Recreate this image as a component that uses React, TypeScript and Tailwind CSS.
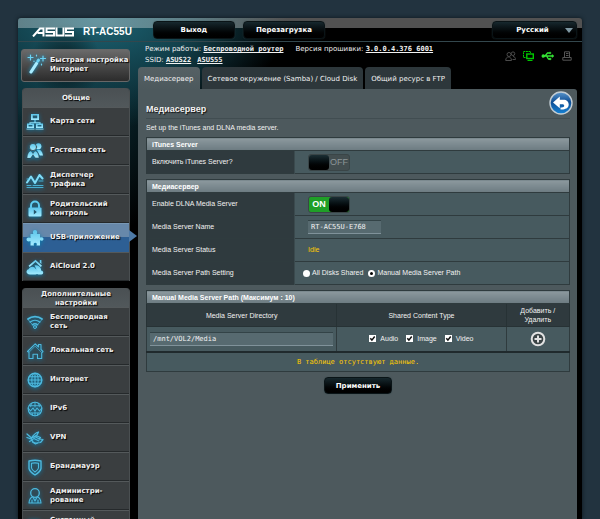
import { useState } from "react"
import type { ReactNode } from "react"
import clsx from "clsx"

const SANS = "font-['DejaVu_Sans',Verdana,sans-serif]"
const ARIAL = "font-['Liberation_Sans',Arial,sans-serif]"
const MONO = "font-['DejaVu_Sans_Mono',monospace]"

const DARK_BUTTON =
  "rounded-[4px] border border-[#0a1417] bg-linear-to-b from-[#17282e] via-[#060c0e] to-black font-bold text-white shadow-[0_0_1px_#33474d]"

function Glyph({ children, filled }: { children: ReactNode; filled?: boolean }) {
  return (
    <svg
      viewBox="0 0 18 18"
      className="size-[18px] shrink-0 overflow-visible drop-shadow-[0_1px_2px_#0a7fb0]"
      fill={filled ? "url(#cyan)" : "none"}
      stroke={filled ? "none" : "#4db9de"}
      strokeWidth="1.1"
      strokeLinejoin="round"
      strokeLinecap="round"
      aria-hidden
    >
      {children}
    </svg>
  )
}

const icons = {
  map: (
    <Glyph filled>
      <path fillRule="evenodd" d="M5 1h8v6H5zM6.8 2.6v2.6h4.4V2.6z" />
      <path d="M8.4 7h1.2v2.2h5V11h-1.2v-.8H4.600V11H3.400V9.200h5z" />
      <path fillRule="evenodd" d="M1 10.500h7v4.500H1zM2.600 12v1.500h3.800V12z" />
      <path fillRule="evenodd" d="M10 10.500h7v4.500h-7zM11.600 12v1.500h3.800V12z" />
      <path d="M.500 15.500h8v1h-8zM9.500 15.500h8v1h-8z" />
    </Glyph>
  ),
  guest: (
    <Glyph filled>
      <circle cx="12.500" cy="4.200" r="2.900" />
      <path d="M10.800 7.800c3-.8 5.400.8 6.200 5.700h-3.200z" />
      <circle cx="7" cy="5" r="3.600" stroke="#353a3c" strokeWidth=".7" />
      <path
        d="M1 16c.2-4.300 1.800-6.600 4-7.300L7 11.500 9 8.700c2.300.7 3.900 3 4.100 7.300H9.300L7 12.800 4.700 16z"
        stroke="#353a3c"
        strokeWidth=".5"
      />
    </Glyph>
  ),
  traffic: (
    <Glyph>
      <path d="M1 11.500 5 5.500l4 6.500 4.500-8 3 3.500" strokeWidth="2" stroke="#7fdcf8" />
      <path d="M1 14.500h4M7 14.500h10M1 8h1.500M13 10h4M1 16.500h16" strokeWidth=".9" />
    </Glyph>
  ),
  lock: (
    <Glyph filled>
      <path
        d="M5 8V5.500a4 4 0 0 1 8 0V8"
        fill="none"
        stroke="#5fcdf2"
        strokeWidth="1.900"
      />
      <rect x="2.500" y="7.500" width="13" height="9" rx="1" />
      <path d="m7.800 9.500 3 2.500-3 2.500z" fill="#24566b" />
    </Glyph>
  ),
  usb: (
    <Glyph filled>
      <path d="M4.500 5h2.800C6.500 3 7 1 9 1s2.600 2 1.800 4H14v3.500c1.500-.8 3.500-.3 3.500 1.400s-2 2.200-3.500 1.300V16.500h-3.500c.7-1.500.2-2.700-1.200-2.700s-2 1.200-1.300 2.700H4.500v-4.400c-1.800.8-4 .3-4-1.600s2.200-2.300 4-1.500z" />
    </Glyph>
  ),
  cloud: (
    <Glyph filled>
      <path d="m2.500 7.800 7-6 6.500 6-1.200 1.100-5.300-4.800-5.800 4.900zM13.800 2h1.600v4l-1.600-1.500z" />
      <path d="M8.500 7.500c2.200-1 5.800.5 6.500 3.500v3.500h-3z" />
      <path d="M4 16.500c-4.200 0-4.500-4.500-1.300-5.200C3.500 8 8.500 8 9.500 10.800c3 .2 3.600 5.200 0 5.700zM12.500 16.500a2 2 0 1 1 0-4h2.300a2 2 0 0 1 .7 4z" />
    </Glyph>
  ),
  wireless: (
    <Glyph>
      <path d="M2 6c4-3.300 10-3.300 14 0" strokeWidth="1.700" />
      <path d="M4.200 9c2.800-2.200 6.800-2.200 9.600 0M6.300 11.700c1.600-1.200 3.800-1.200 5.400 0" strokeWidth="1.400" />
      <path d="M2 6.500 8 13.500M16 6.500l-6 7" strokeWidth=".7" />
      <circle cx="9" cy="14" r="1.500" strokeWidth="1" />
    </Glyph>
  ),
  lan: (
    <Glyph>
      <path d="m1.500 9.500 7.700-7.700L12.500 5V2.500H15v5l2 2-1.300 1.300V16.500h-4.200v-4.300H7v4.300H3v-6.200z" />
      <path d="m3.500 9.800 5.700-5.700 6 6" strokeWidth=".7" />
    </Glyph>
  ),
  internet: (
    <Glyph>
      <circle cx="9" cy="9" r="6.800" strokeWidth="1.400" />
      <ellipse cx="9" cy="9" rx="3.200" ry="6.800" />
      <path d="M2.200 9h13.600M3.200 5.700h11.600M3.200 12.300h11.600M9 2.200v13.600" />
    </Glyph>
  ),
  ipv6: (
    <Glyph>
      <circle cx="9" cy="9" r="6.800" />
      <path d="M3.200 5.700h11.600M9 2.200V7M6 3c-1 1.500-1.200 2.500-1.300 3.800M12 3c1 1.500 1.200 2.500 1.300 3.800M3.500 13h11M9 12v3.800M6 13l.8 2.500M12 13l-.8 2.500" strokeWidth=".9" />
      <path d="m2 8 2.500 3L7 8l2 3 2-3 2.500 3L16 8" />
    </Glyph>
  ),
  vpn: (
    <Glyph>
      <path d="m1 5 4.500 4M1 8.500l4 1.500M5.500 9c1.500-2.500 3.500-5 7-6l-1.500 3c-1.500.5-2.500 1.500-3.500 3" strokeWidth="1.300" />
      <path d="M5.500 9.500c1-1.500 3-2.500 5.500-2.500l3.500 1.500-1.500 1.500 4 .5-2.500 3-3.500.5c-2.500.3-5-1-5.500-4.500zM3.500 12.500 7 10.500" strokeWidth="1.200" />
      <path d="m8 9.500 5 2.500M9.500 8l4 2M6.500 13l3 2 2-1" />
    </Glyph>
  ),
  firewall: (
    <Glyph>
      <path d="M3 3c4-.9 8-.9 12 0v7.500c-.6 3-3 4.700-6 6.500-3-1.800-5.400-3.500-6-6.500z" strokeWidth="1.400" />
      <path d="M5.500 5.300c2.300-.5 4.700-.5 7 0V10c-.4 1.800-1.600 2.800-3.500 4-1.900-1.200-3.100-2.200-3.500-4z" />
    </Glyph>
  ),
  admin: (
    <Glyph>
      <circle cx="9" cy="6" r="4.300" strokeWidth="1.300" />
      <path d="M6.800 9.700C4 10.500 3.200 13 3 16h12c-.2-3-1-5.500-3.800-6.300M6.800 9.700 9 14l2.200-4.300M6 13v3M12 13v3" />
    </Glyph>
  ),
  log: (
    <Glyph>
      <path d="M3.500 4h9v2.500h3v9H3.500z" strokeWidth="1.800" />
      <path d="M6 8h5M6 11h7" />
    </Glyph>
  ),
}

type MenuEntry = { icon: ReactNode; label: string; active?: boolean }

const general: MenuEntry[] = [
  { icon: icons.map, label: "Карта сети" },
  { icon: icons.guest, label: "Гостевая сеть" },
  { icon: icons.traffic, label: "Диспетчер трафика" },
  { icon: icons.lock, label: "Родительский контроль" },
  { icon: icons.usb, label: "USB-приложение", active: true },
  { icon: icons.cloud, label: "AiCloud 2.0" },
]

const advanced: MenuEntry[] = [
  { icon: icons.wireless, label: "Беспроводная сеть" },
  { icon: icons.lan, label: "Локальная сеть" },
  { icon: icons.internet, label: "Интернет" },
  { icon: icons.ipv6, label: "IPv6" },
  { icon: icons.vpn, label: "VPN" },
  { icon: icons.firewall, label: "Брандмауэр" },
  { icon: icons.admin, label: "Администри-рование" },
  { icon: icons.log, label: "Системный журнал" },
]

function Menu({ title, items }: { title: string; items: MenuEntry[] }) {
  return (
    <nav className="ml-px rounded-t-[4px] border-x border-[#4a4f51] bg-[#3a3e40] font-bold text-[#f0f0f0] [text-shadow:1px_1px_1px_#000]">
      <h2 className="flex h-[19px] items-center justify-center rounded-t-[4px] bg-linear-to-b from-[#4a5053] to-[#51585b] px-4 pt-[2px] text-center leading-[9px]">
        {title}
      </h2>
      <ul>
        {items.map((item) => (
          <li key={item.label} className="relative">
            <a
              href="#"
              className={clsx(
                "flex h-[29px] items-center gap-[6px] border-t pr-1 pb-px pl-[3px] leading-[9px]",
                item.active
                  ? "border-[#7898b5] bg-linear-to-b from-[#6788aa] from-45% to-[#2d5f94] to-48%"
                  : "border-[#54595b] shadow-[inset_0_-1px_0_#25292b]"
              )}
            >
              {item.icon}
              <span>{item.label}</span>
            </a>
            {item.active && (
              <svg viewBox="0 0 8 12" className="absolute top-[7px] left-full h-3 w-2" aria-hidden>
                <path d="M0 0 8 6 0 12z" fill="#4d7aa8" />
              </svg>
            )}
          </li>
        ))}
      </ul>
    </nav>
  )
}

function Toggle({ on, label, onChange }: { on: boolean; label: string; onChange: () => void }) {
  const knob = <span className="h-full w-5 rounded-[3px] bg-linear-to-b from-[#1c2f35] to-black" />
  return (
    <button
      type="button"
      role="switch"
      aria-checked={on}
      aria-label={label}
      onClick={onChange}
      className={clsx(
        "flex h-[17px] w-[42px] items-center rounded-[3px] border border-[#3a4547] text-[9px]",
        on ? "bg-[#1f9f27] font-bold text-white" : "bg-[#434e50] text-[#8d9698]"
      )}
    >
      {!on && knob}
      <span className="flex-1 text-center">{on ? "ON" : "OFF"}</span>
      {on && knob}
    </button>
  )
}

function Section({ title, columns, children }: { title: string; columns: string[]; children: ReactNode }) {
  return (
    <table className="mb-[5px] w-full table-fixed border-collapse border border-[#2f3b3e] bg-[#475a5f] text-left">
      <colgroup>
        {columns.map((width, i) => (
          <col key={i} className={width} />
        ))}
      </colgroup>
      <thead>
        <tr className="h-[13px]">
          <th
            colSpan={columns.length}
            className="border-b border-[#2f3b3e] bg-linear-to-b from-[#8c999e] to-[#6c7b81] px-[5px] font-bold leading-[11px] text-white"
          >
            {title}
          </th>
        </tr>
      </thead>
      <tbody>{children}</tbody>
    </table>
  )
}

function Field({ label, htmlFor, children }: { label: string; htmlFor?: string; children: ReactNode }) {
  return (
    <tr className="h-[23px] border-b border-[#2f3b3e]">
      <th className="border-r border-[#3b4a4e] bg-[#2f3a3e] px-[5px] font-normal">
        <label htmlFor={htmlFor}>{label}</label>
      </th>
      <td className="px-[13px]">{children}</td>
    </tr>
  )
}

function PathOption({ label, checked, onChange }: { label: string; checked: boolean; onChange: () => void }) {
  return (
    <label className="flex items-center gap-[2px]">
      <input
        type="radio"
        name="path"
        checked={checked}
        onChange={onChange}
        className="size-[7px] appearance-none rounded-full bg-white checked:border-2 checked:border-white checked:bg-black"
      />
      {label}
    </label>
  )
}

function ContentType({ label }: { label: string }) {
  return (
    <label className="flex items-center gap-1">
      <span className="relative size-[7px]">
        <input type="checkbox" defaultChecked className="peer block size-[7px] appearance-none bg-white" />
        <svg
          viewBox="0 0 7 7"
          className="pointer-events-none absolute inset-0 hidden peer-checked:block"
          fill="none"
          stroke="#111"
          strokeWidth="1.500"
          aria-hidden
        >
          <path d="m1.300 3.300 1.600 1.800 2.800-3.600" />
        </svg>
      </span>
      {label}
    </label>
  )
}

const fieldBox =
  "h-[14px] border-y border-t-[#334347] border-b-[#80929a] bg-[#576a70] px-[3px] text-[#f0f0f0] outline-none"

const tabs = ["Медиасервер", "Сетевое окружение (Samba) / Cloud Disk", "Общий ресурс в FTP"]

function Header() {
  return (
    <header className="flex h-6 items-center border-b border-[#33474d] pt-px pr-[5px] pl-[14px]">
      <div className="flex items-center gap-[9px] pt-[3px]">
        <svg viewBox="0 0 42 10" className="h-[10px] w-[42px]" fill="none" stroke="#fff" strokeWidth="2" role="img" aria-label="ASUS">
          <path d="M1 9.500 8 1.500h3.500v8M5.500 6H11" />
          <path d="M23 1.500h-8.500V5h7.500v3.500h-8.500" />
          <path d="M24.500 .5v8h7v-8" />
          <path d="M42 1.500h-8V5h7v3.500h-8" />
        </svg>
        <span className={clsx(ARIAL, "text-[10px] leading-3 font-bold whitespace-nowrap text-white")}>RT-AC55U</span>
      </div>
      <button type="button" className={clsx(DARK_BUTTON, "ml-[21px] h-[18px] w-[82px]")}>
        Выход
      </button>
      <button type="button" className={clsx(DARK_BUTTON, "ml-2 h-[18px] w-[82px]")}>
        Перезагрузка
      </button>
      <div className="relative ml-auto">
        <select
          aria-label="Язык"
          className={clsx(DARK_BUTTON, "block h-[18px] w-[85px] appearance-none pr-1 [text-align-last:center]")}
        >
          <option>Русский</option>
        </select>
        <svg viewBox="0 0 8 5" className="pointer-events-none absolute top-[7px] right-1 h-[5px] w-2" aria-hidden>
          <path d="M0 0h8L4 5z" fill="#7f98a3" />
        </svg>
      </div>
    </header>
  )
}

function StatusIcons() {
  return (
    <div className="ml-auto flex items-center gap-[7px] pt-[2px] pr-[5px]" aria-hidden>
      <svg viewBox="0 0 11 10" className="h-[10px] w-[11px]" fill="none" stroke="#4b4b4b">
        <circle cx="4" cy="3.500" r="2" />
        <circle cx="8" cy="2.700" r="1.800" />
        <path d="M.7 9.500c0-2.500 1.300-3.500 2.800-3.500s3 1 3 3.500zM8 5.500c1.500 0 2.500 1.200 2.500 3H7.500" />
      </svg>
      <svg viewBox="0 0 11 10" className="h-[10px] w-[11px]" fill="none" stroke="#00c800">
        <path d="M2.500 6.500H.5v-6h7V2" strokeDasharray="2 .6" />
        <rect x="3.800" y="3" width="6.500" height="4.500" strokeWidth="1.400" />
        <path d="M4.500 9.400h5" strokeWidth="1.200" />
      </svg>
      <svg viewBox="0 0 13 10" className="h-[10px] w-[14px]" fill="none" stroke="#35e535" strokeWidth="1.300">
        <path d="M1 5h10M3.500 5l2.500-3h2M5 5l2 3h1.500" />
        <circle cx="1.800" cy="5" r="1.100" fill="#35e535" />
        <path d="m10.500 3.500 2 1.500-2 1.500zM7.800 1.200h1.500v1.500H7.800zM8 7.200h1.500v1.500H8z" fill="#35e535" strokeWidth=".5" />
      </svg>
      <svg viewBox="0 0 10 10" className="size-[10px]" fill="none" stroke="#555">
        <path d="M2.500 6V.800h5V6M4 2.500h2.500M4 4.500h2.500M.800 6.500h8.400v2.700H.800z" />
      </svg>
    </div>
  )
}

export default function App() {
  const [itunes, setItunes] = useState(false)
  const [dlna, setDlna] = useState(true)
  const [manualPath, setManualPath] = useState(true)

  return (
    <div className={clsx(SANS, "flex h-screen overflow-hidden bg-[#22333f] px-[18px] pt-[18px] text-[7px] leading-[10px] text-[#f2f2f2]")}>
      <svg className="absolute size-0" aria-hidden>
        <linearGradient id="cyan" x1="0" y1="0" x2="0" y2="1">
          <stop offset="0" stopColor="#5ac4ea" />
          <stop offset="1" stopColor="#a5ecff" />
        </linearGradient>
      </svg>

      <div className="flex min-w-0 flex-1 flex-col rounded-t-[3px] bg-black bg-[linear-gradient(to_bottom,rgba(255,255,255,0.32)_10px,transparent_10px),radial-gradient(ellipse_35px_40px_at_48px_45px,rgba(0,0,0,0.6),transparent),radial-gradient(ellipse_190px_110px_at_80px_0px,#1d6474,#12404b_50%,transparent),radial-gradient(ellipse_160px_190px_at_40px_40px,#10404c,transparent)] bg-no-repeat shadow-[0_0_4px_#0c151b]">
        <Header />
        <div className="flex min-h-0 flex-1 pr-[5px]">
          <aside className="w-[120px] shrink-0 pt-[7px] pr-2 pl-[3px]">
            <button
              type="button"
              className="mb-[6px] flex h-[33px] w-full items-center gap-[3px] rounded-[3px] border border-[#676767] bg-linear-to-b from-[#6a6a6a] to-[#2c2c2c] pb-[3px] pl-[5px] text-left leading-[9px] font-bold whitespace-nowrap [text-shadow:1px_1px_1px_#000]"
            >
              <svg
                viewBox="0 0 20 20"
                className="size-5 shrink-0 drop-shadow-[0_0_2px_#13a7df]"
                fill="none"
                stroke="#6bd3f5"
                strokeLinecap="round"
                aria-hidden
              >
                <path d="m4 18 5.500-8.500" strokeWidth="3.200" stroke="#a8ecff" />
                <path d="m10.800 7.200.7-1" strokeWidth="3" />
                <path d="M3.500 1v5M1 3.500h5M16 2v5M13.500 4.500h5M9.500 1v1M14.500 10v1M7 7v.5" strokeWidth="1.200" />
              </svg>
              <span className="pt-[2px]">
                Быстрая настройка
                <br />
                Интернет
              </span>
            </button>
            <Menu title="Общие" items={general} />
            <div className="h-[7px]" />
            <Menu title="Дополнительные настройки" items={advanced} />
          </aside>

          <main className="flex min-w-0 flex-1 flex-col">
            <div className="flex h-[25px] items-center whitespace-nowrap">
              <div className="pt-px pl-[7px] leading-[11px]">
                <p>
                  Режим работы:{" "}
                  <a href="#" className={clsx(MONO, "font-bold underline")}>
                    Беспроводной роутер
                  </a>
                  <span className="ml-3">Версия прошивки: </span>
                  <a href="#" className={clsx(MONO, "font-bold underline")}>
                    3.0.0.4.376_6001
                  </a>
                </p>
                <p>
                  SSID:{" "}
                  <a href="#" className={clsx(MONO, "font-bold underline")}>
                    ASUS22
                  </a>
                  <a href="#" className={clsx(MONO, "ml-[6px] font-bold underline")}>
                    ASUS55
                  </a>
                </p>
              </div>
              <StatusIcons />
            </div>

            <div className="flex h-[22px] gap-[2px] whitespace-nowrap">
              {tabs.map((tab, i) => (
                <button
                  key={tab}
                  type="button"
                  className={clsx(
                    "rounded-t-[4px] px-[6px] pt-px",
                    i === 0 ? "bg-linear-to-b from-[#566165] to-[#4d595d]" : "bg-[#2d373b]"
                  )}
                >
                  {tab}
                </button>
              ))}
            </div>

            <section className={clsx(ARIAL, "flex-1 rounded-tr-[3px] bg-[#4d595d] pt-[2px] pr-[7px] pl-2")}>
              <div className="flex h-7 items-start justify-between border-b border-[#414d51]">
                <h1 className="self-end pb-[3px] text-[9px] leading-3 font-bold [text-shadow:1px_1px_1px_#111]">
                  Медиасервер
                </h1>
                <button type="button" aria-label="Назад" className="-mr-[3px]">
                  <svg viewBox="0 0 24 24" className="size-6" aria-hidden>
                    <defs>
                      <linearGradient id="ball" x1="0" y1="0" x2="0" y2="1">
                        <stop offset="0" stopColor="#5b96cc" />
                        <stop offset=".45" stopColor="#0f4e94" />
                        <stop offset="1" stopColor="#1583d6" />
                      </linearGradient>
                    </defs>
                    <circle cx="12" cy="12" r="11" fill="url(#ball)" stroke="#c3cdd4" strokeWidth="1.400" />
                    <path
                      d="M4 11.500 10.800 5.500v3.300h3.700c3 0 5.200 2 5.200 4.800s-2.200 4.600-5.500 4.800h-2.700v-2c2.300.4 3.700-.4 3.700-1.600s-1-1.600-2.300-1.600h-2.100v4z"
                      fill="#fff"
                    />
                  </svg>
                </button>
              </div>
              <p className="leading-[18px]">Set up the iTunes and DLNA media server.</p>

              <Section title="iTunes Server" columns={["w-[35%]", "w-[65%]"]}>
                <Field label="Включить iTunes Server?">
                  <Toggle on={itunes} label="Включить iTunes Server?" onChange={() => setItunes(!itunes)} />
                </Field>
              </Section>

              <Section title="Медиасервер" columns={["w-[35%]", "w-[65%]"]}>
                <Field label="Enable DLNA Media Server">
                  <Toggle on={dlna} label="Enable DLNA Media Server" onChange={() => setDlna(!dlna)} />
                </Field>
                <Field label="Media Server Name" htmlFor="server-name">
                  <input
                    id="server-name"
                    defaultValue="RT-AC55U-E768"
                    className={clsx(MONO, fieldBox, "block w-[73px]")}
                  />
                </Field>
                <Field label="Media Server Status">
                  <span className="text-[#ffcc00]">Idle</span>
                </Field>
                <Field label="Media Server Path Setting">
                  <div className="-ml-[5px] flex gap-[5px]">
                    <PathOption label="All Disks Shared" checked={!manualPath} onChange={() => setManualPath(false)} />
                    <PathOption label="Manual Media Server Path" checked={manualPath} onChange={() => setManualPath(true)} />
                  </div>
                </Field>
              </Section>

              <Section title="Manual Media Server Path (Максимум : 10)" columns={["w-[45%]", "w-[40%]", "w-[15%]"]}>
                <tr className="h-[23px] bg-[#2f3a3e] text-center leading-[9px]">
                  <th className="border border-[#273235] font-normal">Media Server Directory</th>
                  <th className="border border-[#273235] font-normal">Shared Content Type</th>
                  <th className="border border-[#273235] font-normal">
                    Добавить /
                    <br />
                    Удалить
                  </th>
                </tr>
                <tr className="h-[25px]">
                  <td className="border border-[#2f3b3e] px-[3px]">
                    <input
                      aria-label="Media Server Directory"
                      defaultValue="/mnt/VOL2/Media"
                      className={clsx(MONO, fieldBox, "block w-full")}
                    />
                  </td>
                  <td className="border border-[#2f3b3e]">
                    <div className="flex justify-center gap-2">
                      <ContentType label="Audio" />
                      <ContentType label="Image" />
                      <ContentType label="Video" />
                    </div>
                  </td>
                  <td className="border border-[#2f3b3e]">
                    <button type="button" aria-label="Добавить" className="mx-auto block">
                      <svg viewBox="0 0 16 16" className="size-4" fill="#3b4446" stroke="#e2e2e2" strokeWidth="2" aria-hidden>
                        <circle cx="8" cy="8" r="6.300" />
                        <path d="M8 4.500v7M4.500 8h7" />
                      </svg>
                    </button>
                  </td>
                </tr>
                <tr className="h-5 border-t-2 border-[#202a2d]">
                  <td colSpan={3} className={clsx(MONO, "text-center text-[#ffcc00]")}>
                    В таблице отсутствуют данные.
                  </td>
                </tr>
              </Section>

              <button type="button" className={clsx(DARK_BUTTON, SANS, "mx-auto block h-[17px] w-[68px]")}>
                Применить
              </button>
            </section>
          </main>
        </div>
      </div>
    </div>
  )
}
